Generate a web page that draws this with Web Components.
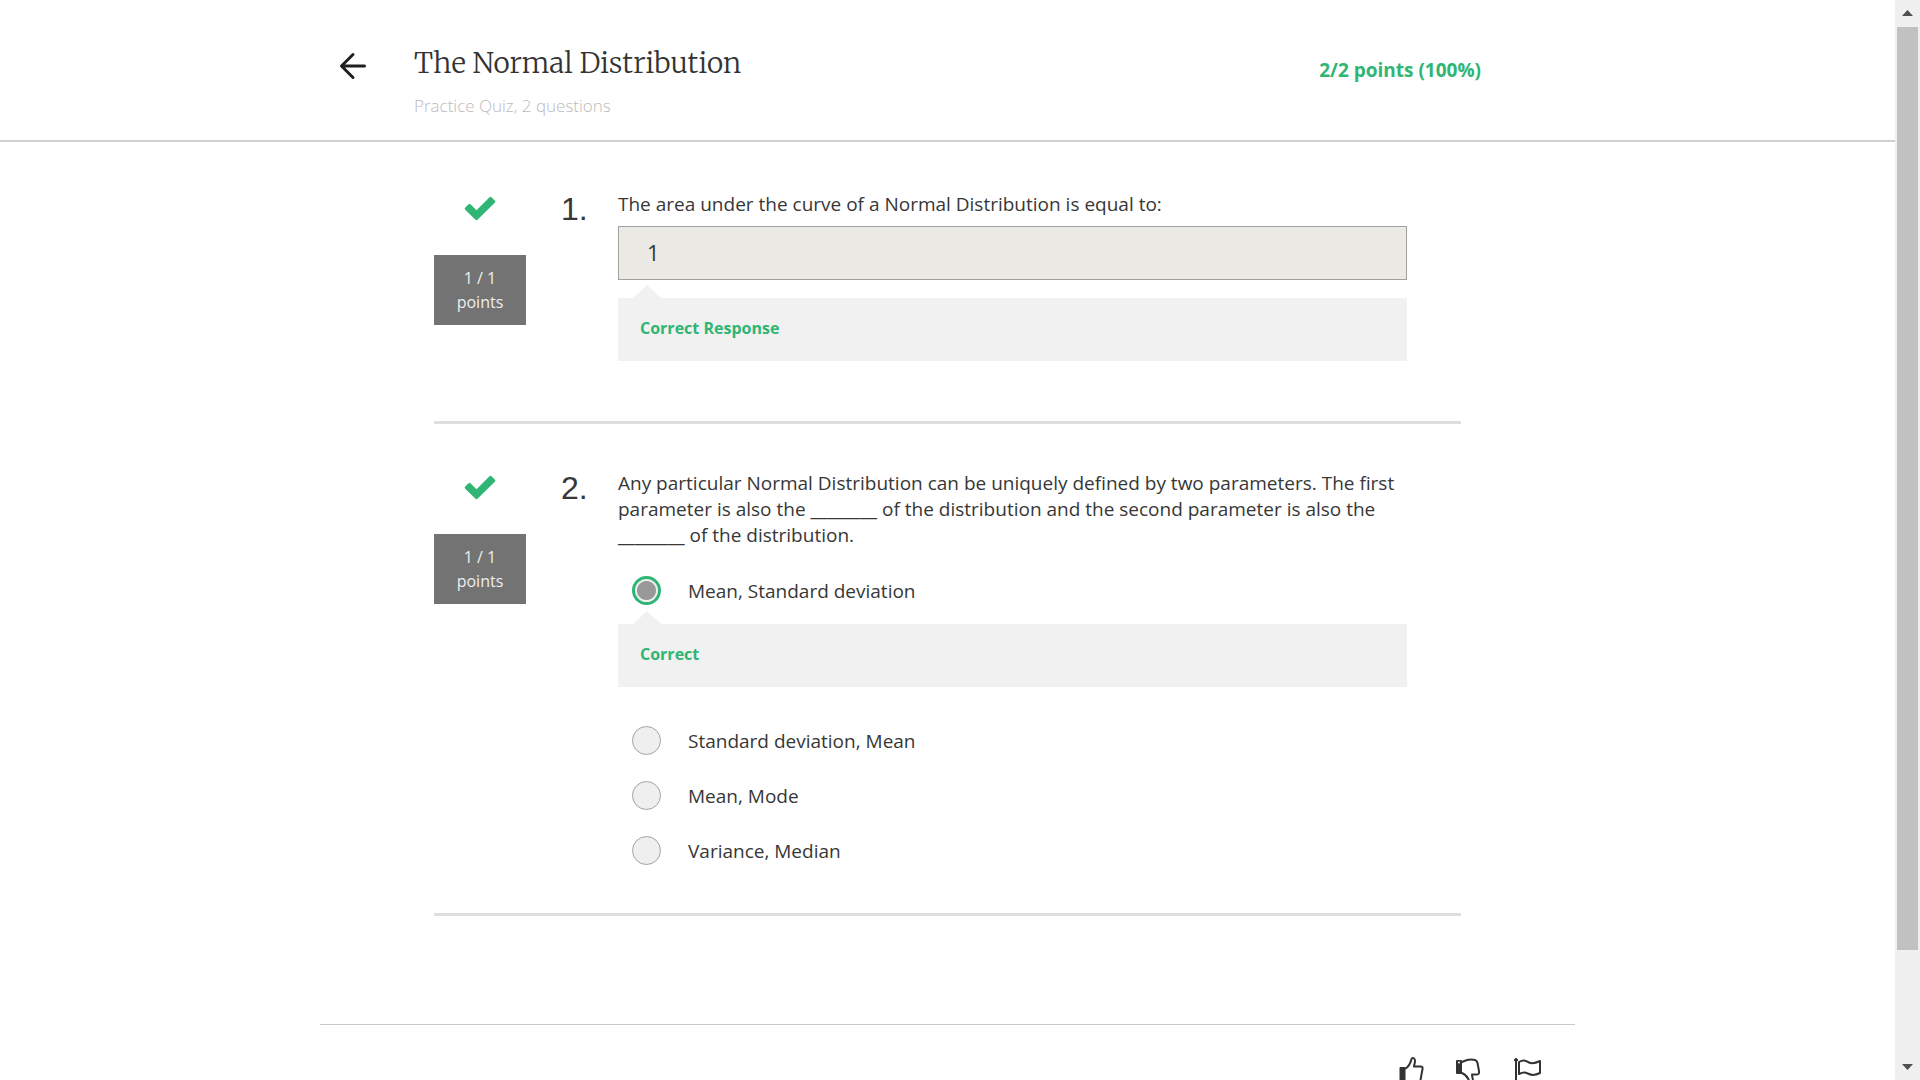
<!DOCTYPE html>
<html lang="en">
<head>
<meta charset="utf-8">
<title>The Normal Distribution</title>
<style>
  html, body { margin: 0; height: 100%; }
  body {
    background: #fff; color: #373737; overflow: hidden;
    font: 400 19px/26px "Open Sans", "Noto Sans", sans-serif;
    --green: #2fb574; --panel: #f1f1f1; --rule: #dedede;
  }
</style>
</head>
<body>
<quiz-page>
  <quiz-header slot="header" heading="The Normal Distribution" sub="Practice Quiz, 2 questions" score="2/2 points (100%)"></quiz-header>
  <quiz-question number="1." points="1 / 1">
    <text-answer value="1" prompt="The area under the curve of a Normal Distribution is equal to:"></text-answer>
    <answer-feedback style="--gap:18px">Correct Response</answer-feedback>
  </quiz-question>
  <quiz-question number="2." points="1 / 1">
    <choice-group prompt="Any particular Normal Distribution can be uniquely defined by two parameters. The first parameter is also the ________ of the distribution and the second parameter is also the ________ of the distribution." options="Mean, Standard deviation|Standard deviation, Mean|Mean, Mode|Variance, Median" feedback="Correct"></choice-group>
  </quiz-question>
  <quiz-footer slot="footer"></quiz-footer>
</quiz-page>

<script>
function define(name, render) {
  customElements.define(name, class extends HTMLElement {
    constructor() {
      super();
      this.attachShadow({ mode: "open" });
    }
    connectedCallback() {
      this.shadowRoot.innerHTML = render(this);
    }
  });
}

define("scroll-rail", () => `
  <style>
    :host { display: flex; flex-direction: column; background: #f0f0f0; box-sizing: border-box; padding: 0 2px; }
    svg { display: block; width: 21px; height: 27px; flex: none; }
    .track { flex: 1; }
    .thumb { height: 90%; background: #c1c1c1; }
  </style>
  <svg viewBox="0 0 21 27"><path d="M5 16h11l-5.500-6z" fill="#505050"/></svg>
  <div class="track"><div class="thumb"></div></div>
  <svg viewBox="0 0 21 27"><path d="M5 11h11l-5.500 6z" fill="#505050"/></svg>`);

define("quiz-page", () => `
  <style>
    :host { display: grid; grid-template-columns: minmax(0, 1fr) 25px; height: 100vh; }
    .view { overflow: hidden; }
    main { width: min(1027px, 90%); margin: 0 auto; padding-top: 3px; }
  </style>
  <div class="view">
    <slot name="header"></slot>
    <main><slot></slot></main>
    <slot name="footer"></slot>
  </div>
  <scroll-rail></scroll-rail>`);

define("quiz-header", el => `
  <style>
    :host { display: block; border-bottom: 2px solid #d0d0d0; }
    header { display: flex; align-items: flex-start; box-sizing: border-box; width: min(1255px, 96%); height: 140px; margin: 0 auto; padding: 46px 94px 0 18px; }
    a { color: #1f1f1f; padding-top: 5px; width: 76px; }
    svg { display: block; }
    .titles { flex: 1; }
    h1 { margin: 0; font: 300 28px/34px Merriweather, "Noto Serif", "DejaVu Serif", serif; color: #333; }
    p { margin: 14px 0 0; font-weight: 300; font-size: 17px; line-height: 24px; color: #bbb; }
    .score { font-weight: 700; color: var(--green); padding-top: 11px; }
  </style>
  <header>
    <a href="#" aria-label="Back"><svg width="30" height="30" viewBox="0 0 30 30" fill="none" stroke="currentColor" stroke-width="3" stroke-linecap="round" stroke-linejoin="round"><path d="M15 3.500L3.500 15L15 26.500M3.500 15H26.500"/></svg></a>
    <div class="titles"><h1>${el.getAttribute("heading")}</h1><p>${el.getAttribute("sub")}</p></div>
    <div class="score">${el.getAttribute("score")}</div>
  </header>`);

define("quiz-question", el => `
  <style>
    :host { display: block; border-bottom: 3px solid var(--rule); }
    section { display: flex; padding-top: 46px; }
    .mark { display: flex; flex-direction: column; align-items: center; width: 92px; }
    svg { display: block; margin: 5px 0 34px; }
    .badge { box-sizing: border-box; width: 92px; padding: 11px 0; background: #737373; color: #eee; text-align: center; font-size: 16px; line-height: 24px; }
    .number { width: 92px; padding-left: 35px; box-sizing: border-box; font: 400 32px/36px "Liberation Sans", Arial, sans-serif; }
    .body { flex: 1; padding-right: 54px; min-width: 0; }
  </style>
  <section>
    <div class="mark">
      <svg width="32" height="25" viewBox="0 0 32 25"><path d="M1 13.500Q.300 12.500 1 11.800L4.500 8.300Q5.500 7.500 6.500 8.300L12.500 14.200L25.500 1.200Q26.500.400 27.500 1.200L31 4.700Q31.800 5.700 31 6.600L13.500 23.800Q12.500 24.500 11.500 23.800Z" fill="#2fb574"/></svg>
      <div class="badge">${el.getAttribute("points")}<br>points</div>
    </div>
    <div class="number">${el.getAttribute("number")}</div>
    <div class="body"><slot></slot></div>
  </section>`);

define("text-answer", el => `
  <style>
    :host { display: block; }
    label { display: block; margin-bottom: 9px; }
    input { display: block; box-sizing: border-box; width: 100%; height: 54px; padding: 0 28px 2px; border: 1px solid #a0a0a0; border-radius: 0; background: #eae9e4; color: #373737; font: 400 22px/30px "Open Sans", sans-serif; outline: 0; }
  </style>
  <label for="answer">${el.getAttribute("prompt")}</label>
  <input id="answer" type="text" readonly value="${el.getAttribute("value")}">`);

define("answer-feedback", () => `
  <style>
    :host { display: block; position: relative; box-sizing: border-box; margin-top: var(--gap, 6px); padding: 18px 22px 21px; margin-bottom: var(--after, 60px); background: var(--panel); color: var(--green); font-size: 16px; font-weight: 700; line-height: 24px; }
    :host::before { content: ""; position: absolute; left: 15px; top: -13px; border: solid transparent; border-width: 0 14px 13px; border-bottom-color: var(--panel); }
  </style>
  <slot></slot>`);

define("choice-group", el => `
  <style>
    :host { display: block; padding-bottom: 35px; }
    fieldset { border: 0; margin: 0; padding: 0; min-width: 0; }
    legend { padding: 0; margin-bottom: 15px; }
    label { display: flex; align-items: center; gap: 27px; height: 55px; padding-left: 14px; }
    input { appearance: none; box-sizing: border-box; width: 29px; height: 29px; margin: 0; border: 1px solid #a3a3a3; border-radius: 50%; background: #efefef; }
    input:checked { border: 3px solid var(--green); background: radial-gradient(circle closest-side, #999 0 9px, #efefef 10px); }
    answer-feedback { --after: 26px; }
  </style>
  <fieldset>
    <legend>${el.getAttribute("prompt")}</legend>
    ${el.getAttribute("options").split("|").map((text, i) => `
      <label><input type="radio" name="choice"${i ? "" : " checked"}>${text}</label>
      ${i ? "" : `<answer-feedback>${el.getAttribute("feedback")}</answer-feedback>`}`).join("")}
  </fieldset>`);

define("quiz-footer", () => `
  <style>
    :host { display: block; }
    footer { display: flex; justify-content: flex-end; gap: 27px; box-sizing: border-box; width: min(1255px, 96%); margin: 108px auto 0; padding: 31px 33px 40px 0; border-top: 1px solid #c9c9c9; }
    button { border: 0; padding: 0; background: none; color: #333; }
    svg { display: block; fill: none; stroke: currentColor; stroke-width: 2; stroke-linejoin: round; stroke-linecap: round; }
  </style>
  <footer>
    <button type="button" aria-label="Like"><svg width="30" height="30" viewBox="0 0 30 30"><path d="M2.500 12h4v15h-4z" fill="currentColor"/><path d="M7.500 12.500C11 10.500 12.500 7 13.500 3C14 1.500 17 1.500 17 5C17 7 16 9 16 10.500H23Q25 11 24.500 13L22.500 24Q22 26.500 19.500 26.500H13L7.500 25"/></svg></button>
    <button type="button" aria-label="Dislike"><svg width="30" height="30" viewBox="0 0 30 30"><path d="M2 5h4v12h-4z" fill="currentColor"/><path d="M4 6.500v.1" stroke="#fff"/><path d="M7 6L12 4Q16 3 20 4Q22 4.500 22.500 7L24 15Q24.500 18.500 22 18.500H17C17 21 18 22.500 18 25C18 28 15 28 14.500 26C13.500 22 11.500 19 7 17"/></svg></button>
    <button type="button" aria-label="Flag"><svg width="30" height="30" viewBox="0 0 30 30"><path d="M4 5v24"/><circle cx="4" cy="4" r="1.500" fill="currentColor" stroke-width="1"/><path d="M7 6C12 3 14 5 17 6.500C20 8 24 7 28 5V17C24 19 20 19.500 17 18C14 16.500 12 15.500 7 18Z"/></svg></button>
  </footer>`);
</script>
</body>
</html>
